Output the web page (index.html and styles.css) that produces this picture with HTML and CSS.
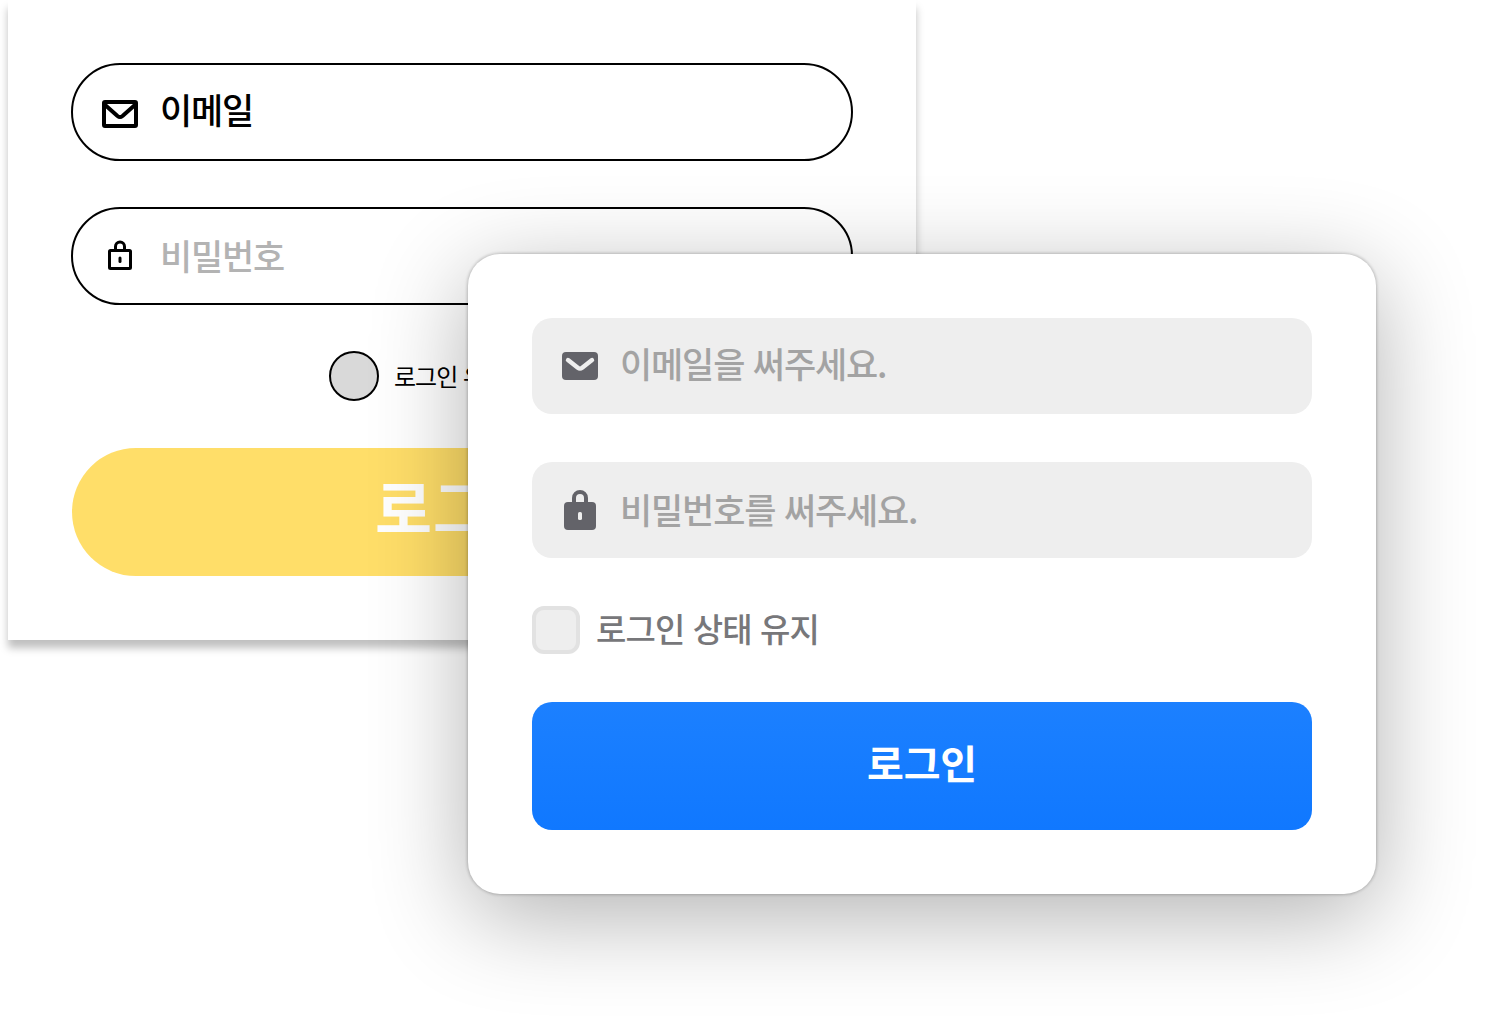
FILE: index.html
```
<!DOCTYPE html>
<html lang="ko">
<head>
    <meta charset="UTF-8">
    <meta name="viewport" content="width=device-width, initial-scale=1.0">
    <title>로그인</title>
    <link rel="stylesheet" href="styles.css">
</head>
<body>
<main class="stage">
    <!-- Old login form -->
    <form class="card card-old">
        <label class="pill">
            <svg class="icon" width="48" height="48" viewBox="0 0 48 48" fill="none" stroke="#000" stroke-width="4" stroke-linejoin="round">
                <rect x="8" y="13" width="32" height="24" rx="1"/>
                <path d="M8 15 L21.5 27 Q24 29 26.5 27 L40 15"/>
            </svg>
            <span class="pill-text filled">이메일</span>
        </label>
        <label class="pill">
            <svg class="icon" width="48" height="48" viewBox="0 0 48 48" fill="none" stroke="#000" stroke-width="3">
                <rect x="13.5" y="17.5" width="21" height="18" rx="1"/>
                <path d="M19.5 17 V13.5 a4.5 4.5 0 0 1 9 0 V17"/>
                <path d="M24 25 V28.4" stroke-linecap="round"/>
            </svg>
            <span class="pill-text">비밀번호</span>
        </label>
        <label class="keep-old">
            <span class="circle"></span>
            <span>로그인 유지</span>
        </label>
        <button type="button" class="btn-old">로그인</button>
    </form>

    <!-- New login form -->
    <form class="card card-new">
        <label class="field field-email">
            <svg class="icon" width="48" height="48" viewBox="0 0 48 48" fill="none">
                <rect x="6" y="10" width="36" height="28" rx="4" fill="#636369"/>
                <path d="M12 18 L21.8 25.8 Q24 27.4 26.2 25.8 L36 18" stroke="#eee" stroke-width="4.4" stroke-linecap="round"/>
            </svg>
            <span class="field-text">이메일을 써주세요.</span>
        </label>
        <label class="field">
            <svg class="icon" width="48" height="48" viewBox="0 0 48 48" fill="none">
                <rect x="8" y="16" width="32" height="28" rx="4" fill="#636369"/>
                <path d="M18 17 V12 a6 6 0 0 1 12 0 V17" stroke="#636369" stroke-width="4"/>
                <rect x="22" y="26" width="4" height="8" rx="1.6" fill="#eee"/>
            </svg>
            <span class="field-text">비밀번호를 써주세요.</span>
        </label>
        <label class="keep">
            <span class="box"></span>
            <span class="keep-text">로그인 상태 유지</span>
        </label>
        <button type="button" class="btn">로그인</button>
    </form>
</main>
</body>
</html>
```
FILE: styles.css
```
* {
    box-sizing: border-box;
}
body {
    margin: 0;
    background-color: #fff;
    font-family: "Noto Sans CJK KR", sans-serif;
}
.stage {
    position: relative;
    width: 1488px;
    height: 1030px;
    overflow: hidden;
    padding-left: 8px;
}
.card {
    display: flex;
    flex-direction: column;
    width: 908px;
    height: 640px;
    background-color: #fff;
}
.icon {
    flex: none;
}

/* old form */
.card-old {
    padding: 63px;
    box-shadow: 0 8px 8px rgba(0, 0, 0, 0.25);
}
.pill {
    display: flex;
    align-items: center;
    gap: 16px;
    height: 98px;
    margin-bottom: 46px;
    padding: 2px 23px 0;
    border: 2px solid #000;
    border-radius: 49px;
}
.pill-text {
    font-size: 35px;
    font-weight: 500;
    line-height: 48px;
    letter-spacing: -1.2px;
    color: #b3b3b3;
    padding-bottom: 4px;
}
.pill-text.filled {
    color: #000;
    padding-bottom: 8px;
}
.keep-old {
    display: flex;
    align-items: center;
    align-self: center;
    gap: 15px;
    width: 266px;
    height: 50px;
    font-size: 24px;
    line-height: 32px;
    letter-spacing: -1px;
    white-space: nowrap;
}
.circle {
    width: 50px;
    height: 50px;
    border: 2px solid #000;
    border-radius: 50%;
    background-color: #d9d9d9;
}
.btn-old {
    flex: none;
    height: 128px;
    margin: 47px 1px 0;
    padding: 0 0 13px;
    border: none;
    border-radius: 64px;
    background-color: #ffde69;
    color: #fff;
    font-family: inherit;
    font-size: 62px;
    font-weight: 700;
    line-height: 1;
    letter-spacing: 1px;
}

/* new form */
.card-new {
    position: absolute;
    left: 468px;
    top: 254px;
    padding: 64px;
    border-radius: 32px;
    box-shadow: 0 0 3px 1px rgba(0, 0, 0, 0.2), 0 22px 96px rgba(0, 0, 0, 0.31);
}
.field {
    display: flex;
    align-items: center;
    gap: 16px;
    height: 96px;
    margin-bottom: 48px;
    padding: 0 24px;
    border-radius: 20px;
    background-color: #eee;
}
.field-text {
    font-size: 35px;
    font-weight: 500;
    line-height: 48px;
    letter-spacing: -1.15px;
    color: #a3a3a3;
    padding-bottom: 2px;
}
.field-email .field-text {
    padding-bottom: 6px;
}
.keep {
    display: flex;
    align-items: center;
    gap: 16px;
    height: 48px;
    font-size: 33px;
    font-weight: 500;
    line-height: 48px;
    letter-spacing: -0.9px;
    color: #77777a;
}
.keep-text {
    padding-bottom: 4px;
}
.box {
    width: 48px;
    height: 48px;
    border: 4px solid #e2e2e2;
    border-radius: 12px;
    background-color: #eee;
}
.btn {
    flex: none;
    height: 128px;
    margin-top: 48px;
    padding: 0 0 9px;
    border: none;
    border-radius: 20px;
    background: linear-gradient(#1c80ff, #1078ff);
    color: #fff;
    font-family: inherit;
    font-size: 40px;
    font-weight: 700;
    letter-spacing: -0.2px;
}
```
